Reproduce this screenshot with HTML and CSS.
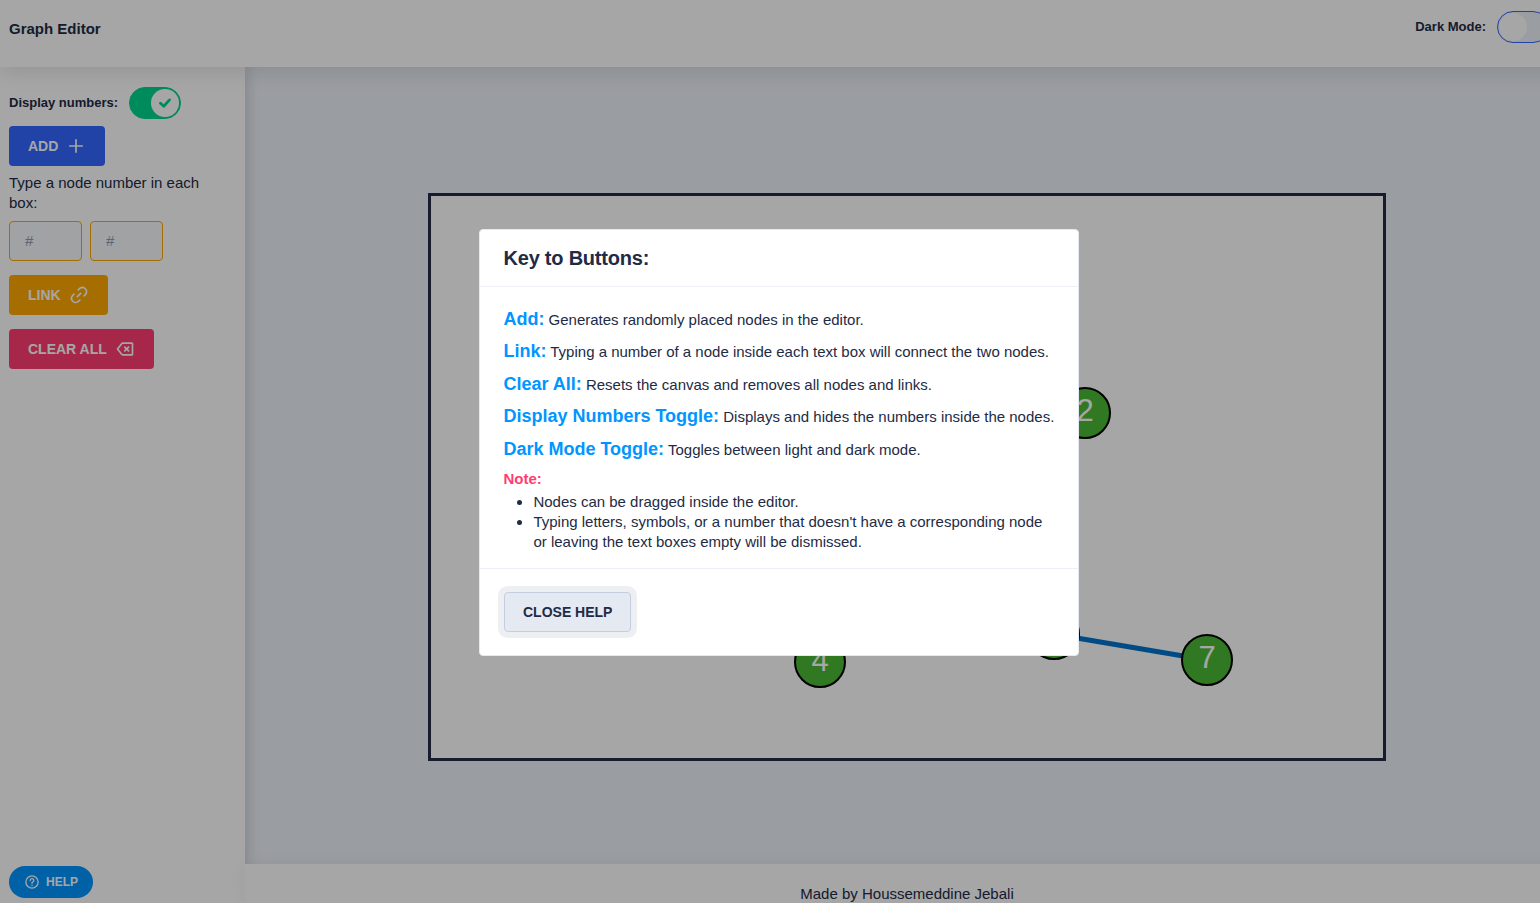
FILE: index.html
```html
<!DOCTYPE html>
<html lang="en">
<head>
<meta charset="utf-8">
<title>Graph Editor</title>
<link rel="stylesheet" href="styles.css">
</head>
<body>
<div class="page">
  <header class="header">
    <div class="title">Graph Editor</div>
    <div class="toggle-row"><span class="label">Dark Mode:</span><span class="toggle off"><span class="knob"></span></span></div>
  </header>
  <div class="body">
    <aside class="sidebar">
      <div class="toggle-row"><span class="label">Display numbers:</span><span class="toggle on"><span class="knob"><svg width="12" height="12" viewBox="0 0 12 12"><path d="M1.5 6.2 4.8 9.2 10.5 2.9"/></svg></span></span></div>
      <button class="btn add"><span>ADD</span><svg class="icon" width="20" height="20" viewBox="0 0 24 24"><path d="M12 4.5v15M4.5 12h15"/></svg></button>
      <p class="hint">Type a node number in each box:</p>
      <div class="inputs"><input placeholder="#"><input placeholder="#"></div>
      <button class="btn link"><span>LINK</span><svg class="icon solid" width="20" height="20" viewBox="0 0 24 24"><path d="M13.29 9.29l-4 4a1 1 0 0 0 0 1.42 1 1 0 0 0 1.42 0l4-4a1 1 0 0 0-1.42-1.42z"/><path d="M12.28 17.4L11 18.67a4.2 4.2 0 0 1-5.58.4 4 4 0 0 1-.27-5.93l1.42-1.43a1 1 0 0 0 0-1.42 1 1 0 0 0-1.42 0l-1.27 1.28a6.15 6.15 0 0 0-.67 8.07 6 6 0 0 0 9.07.6l1.42-1.42a1 1 0 0 0-1.42-1.42z"/><path d="M19.66 3.22a6.18 6.18 0 0 0-8.13.68L10.45 5a1.09 1.09 0 0 0-.17 1.61 1 1 0 0 0 1.42 0L13 5.3a4.17 4.17 0 0 1 5.57-.4 4 4 0 0 1 .27 5.95l-1.42 1.43a1 1 0 0 0 0 1.42 1 1 0 0 0 1.42 0l1.42-1.42a6 6 0 0 0-.6-9.06z"/></svg></button>
      <button class="btn clear"><span>CLEAR ALL</span><svg class="icon" width="20" height="20" viewBox="0 0 24 24"><path d="M9.2 5H20.2a.8.8 0 0 1 .8.8v12.4a.8.8 0 0 1-.8.8H9.2a1.5 1.5 0 0 1-1.2-.6L3 12 8 5.6A1.5 1.5 0 0 1 9.2 5zM11.7 9.7l4.6 4.6M16.3 9.7l-4.6 4.6"/></svg></button>
      <button class="btn help"><svg width="16" height="16" viewBox="0 0 24 24"><circle cx="12" cy="12" r="9.2"/><path d="M9.3 9.7a2.7 2.7 0 1 1 3.6 2.5c-.6.2-.9.7-.9 1.5v.2M12 16.6v.6"/></svg><span>HELP</span></button>
    </aside>
    <div class="main">
      <main class="stage">
        <div class="canvas">
          <svg class="graph" width="952" height="562" viewBox="431 196 952 562">
            <path class="edge" d="M1053 634 1207 660"/>
            <circle cx="1085" cy="413" r="25"/><text x="1085" y="421">2</text>
            <circle cx="820" cy="662" r="25"/><text x="820" y="671">4</text>
            <circle cx="1054" cy="634" r="25"/>
            <circle cx="1207" cy="660" r="25"/><text x="1207" y="668">7</text>
          </svg>
        </div>
      </main>
      <footer class="footer">Made by Houssemeddine Jebali</footer>
    </div>
  </div>
  <div class="overlay">
    <section class="card">
      <h1 class="card-head">Key to Buttons:</h1>
      <div class="card-body">
        <p class="entry"><b>Add:</b> Generates randomly placed nodes in the editor.</p>
        <p class="entry"><b>Link:</b> Typing a number of a node inside each text box will connect the two nodes.</p>
        <p class="entry"><b>Clear All:</b> Resets the canvas and removes all nodes and links.</p>
        <p class="entry"><b>Display Numbers Toggle:</b> Displays and hides the numbers inside the nodes.</p>
        <p class="entry"><b>Dark Mode Toggle:</b> Toggles between light and dark mode.</p>
        <div class="note">Note:</div>
        <ul>
          <li>Nodes can be dragged inside the editor.</li>
          <li>Typing letters, symbols, or a number that doesn't have a corresponding node or leaving the text boxes empty will be dismissed.</li>
        </ul>
      </div>
      <div class="card-foot"><button class="btn close">CLOSE HELP</button></div>
    </section>
  </div>
</div>
</body>
</html>
```
FILE: styles.css
```css
* { box-sizing: border-box; }
html, body { margin: 0; height: 100%; overflow: hidden; }
body { font: 15px/20px "Liberation Sans", Arial, sans-serif; color: #222b45; }
.page { position: relative; width: 1558px; height: 903px; display: flex; flex-direction: column; background: #edf1f7; }
.header { position: relative; z-index: 2; height: 67px; flex: none; display: flex; justify-content: space-between; padding: 11px 9px; background: #fff; box-shadow: 0 8px 16px rgba(44, 51, 73, .1); }
.title { font-weight: 700; line-height: 20px; padding-top: 8px; }
.toggle-row { display: flex; align-items: center; gap: 11px; height: 32px; }
.label { font-size: 13px; font-weight: 700; }
.toggle { display: flex; width: 52px; height: 32px; border: 1px solid #3366ff; border-radius: 16px; background: #edf1f7; padding: 1px; }
.knob { display: flex; align-items: center; justify-content: center; width: 28px; height: 28px; border-radius: 50%; background: #fff; }
.on { background: #00d68f; border-color: #00d68f; justify-content: flex-end; }
.knob svg { fill: none; stroke: #00d68f; stroke-width: 2.8; stroke-linecap: round; stroke-linejoin: round; }
.body { flex: 1; display: flex; min-height: 0; }
.sidebar { width: 245px; flex: none; display: flex; flex-direction: column; align-items: flex-start; padding: 20px 9px 5px; background: #fff; box-shadow: 0 8px 16px rgba(44, 51, 73, .1); }
.btn { display: flex; align-items: center; height: 40px; padding: 0 18px; border: 1px solid transparent; border-radius: 4px; color: #fff; font: 700 14px/16px "Liberation Sans", Arial, sans-serif; white-space: nowrap; }
.btn svg { flex: none; fill: none; stroke: #fff; stroke-width: 2; stroke-linecap: round; stroke-linejoin: round; }
.btn .icon { margin-left: auto; }
.btn .solid { fill: #fff; stroke: none; }
.add { width: 96px; background: #3366ff; margin-top: 7px; }
.hint { margin: 7px 0 8px; width: 215px; }
.inputs { display: flex; gap: 8px; }
.inputs input { width: 73px; height: 40px; border: 1px solid #ffaa00; border-radius: 4px; background: #f7f9fc; padding: 0 15px 2px; font: 15px "Liberation Sans", Arial, sans-serif; }
.inputs input::placeholder { color: #8f9bb3; opacity: 1; }
.link { width: 99px; background: #ffaa00; margin-top: 14px; }
.clear { width: 145px; background: #ff3d71; margin-top: 14px; }
.help { width: 84px; height: 32px; margin-top: auto; padding: 0 14px; gap: 6px; border-radius: 16px; background: #0095ff; font-size: 12px; }
.main { flex: 1; display: flex; flex-direction: column; }
.stage { flex: 1; display: flex; justify-content: center; padding: 126px 0 0 11px; box-shadow: inset 10px 0 12px -8px rgba(44, 51, 73, .1); }
.canvas { width: 958px; height: 568px; border: 3px solid #222b45; background: #fff; }
.graph { display: block; }
.graph circle { fill: #4cb935; stroke: #000; stroke-width: 2; }
.graph text { fill: #fff; font-size: 31px; text-anchor: middle; }
.edge { stroke: #0074cc; stroke-width: 5; }
.footer { height: 39px; padding: 20px 0 0 11px; text-align: center; background: #fff; box-shadow: 0 0 16px rgba(44, 51, 73, .06); white-space: nowrap; }
.overlay { position: absolute; inset: 0; z-index: 5; display: flex; justify-content: center; align-items: flex-start; padding-top: 229px; background: rgba(0, 0, 0, .35); }
.card { width: 600px; height: 427px; border: 1px solid #e4e9f2; border-radius: 4px; background: #fff; }
.card-head { margin: 0; height: 57px; padding: 16px 23.5px; border-bottom: 1px solid #edf1f7; font-size: 20px; line-height: 24px; letter-spacing: -.22px; }
.card-body { height: 282px; padding: 16px 23.4px; border-bottom: 1px solid #edf1f7; }
.entry { margin: 0; height: 32.4px; line-height: 32px; white-space: nowrap; }
.entry b { font-size: 18px; color: #0095ff; }
.note { font-weight: 700; color: #ff3d71; line-height: 24px; margin: 2px 0 1px; }
ul { margin: 0; padding-left: 30px; }
.card-foot { padding: 23px 24px; }
.close { background: #e4e9f2; border-color: #c5cee0; color: #222b45; width: 127px; box-shadow: 0 0 0 6px #edeff3; }
```
